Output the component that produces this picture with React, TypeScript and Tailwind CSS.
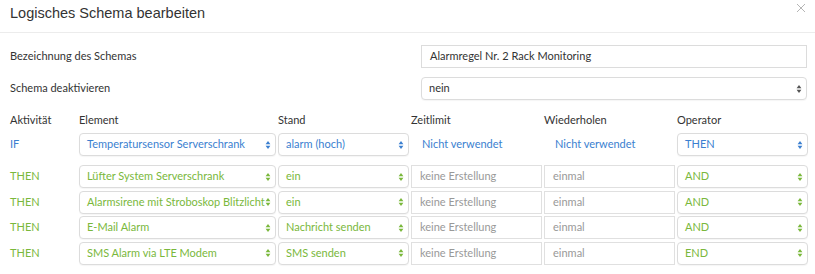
import React from "react";

const BLUE = "text-[#3b7fd0]";
const GREEN = "text-[#7ab83c]";

function Arrows({ color }: { color: string }) {
  return (
    <svg width="6" height="10" viewBox="0 0 6 10" className="shrink-0">
      <path d="M3 1 L5.4 4.2 L0.6 4.2 Z" fill={color} />
      <path d="M3 9 L5.4 5.8 L0.6 5.8 Z" fill={color} />
    </svg>
  );
}

function Select({
  text,
  tone,
}: {
  text: string;
  tone: "blue" | "green" | "dark";
}) {
  const cls = tone === "blue" ? BLUE : tone === "green" ? GREEN : "text-[#333]";
  const arrow = tone === "blue" ? "#3b7fd0" : tone === "green" ? "#7ab83c" : "#555";
  return (
    <div className="h-[23px] flex items-center justify-between rounded-[4px] border border-[#dcdcdc] bg-white pl-[7px] pr-[4px] shadow-[0_1px_1px_rgba(0,0,0,0.04)]">
      <span className={`${cls} whitespace-nowrap`}>{text}</span>
      <Arrows color={arrow} />
    </div>
  );
}

function Input({ text }: { text: string }) {
  return (
    <div className="h-[23px] flex items-center border border-[#e0e0e0] bg-white pl-[8px] text-[#999]">
      {text}
    </div>
  );
}

const rows = [
  { el: "Lüfter System Serverschrank", st: "ein", op: "AND" },
  { el: "Alarmsirene mit Stroboskop Blitzlicht", st: "ein", op: "AND" },
  { el: "E-Mail Alarm", st: "Nachricht senden", op: "AND" },
  { el: "SMS Alarm via LTE Modem", st: "SMS senden", op: "END" },
];

const grid = "grid grid-cols-[67px_197px_131px_131px_131px_131px] gap-x-[2px]";

export default function App() {
  return (
    <div
      className="w-[815px] h-[274px] bg-white text-[11px] text-[#333] overflow-hidden"
      style={{ fontFamily: "Lato, 'Open Sans', sans-serif" }}
    >
      <div className="h-[33px] border-b border-[#ececec] flex items-start justify-between pl-[10px] pr-[9px]">
        <div
          className="text-[14.5px] text-[#333] mt-[3px]"
          style={{ fontFamily: "'Liberation Sans', Arial, sans-serif" }}
        >
          Logisches Schema bearbeiten
        </div>
        <svg width="10" height="10" viewBox="0 0 10 10" className="mt-[3px]">
          <path d="M1 1 L9 9 M9 1 L1 9" stroke="#b5b5b5" strokeWidth="1" />
        </svg>
      </div>

      <div className="pt-[12px] pl-[10px] pr-[8px]">
        <div className="flex items-center h-[23px]">
          <div className="w-[411px]">Bezeichnung des Schemas</div>
          <div className="flex-1 h-[23px] flex items-center border border-[#dcdcdc] pl-[8px] text-[#333]">
            Alarmregel Nr. 2 Rack Monitoring
          </div>
        </div>
        <div className="flex items-center h-[23px] mt-[9px]">
          <div className="w-[411px]">Schema deaktivieren</div>
          <div className="flex-1">
            <Select text="nein" tone="dark" />
          </div>
        </div>

        <div className={`${grid} mt-[12px] h-[16px] items-center`}>
          <div>Aktivität</div>
          <div>Element</div>
          <div>Stand</div>
          <div>Zeitlimit</div>
          <div>Wiederholen</div>
          <div>Operator</div>
        </div>

        <div className={`${grid} mt-[5px] items-center`}>
          <div className={BLUE}>IF</div>
          <Select text="Temperatursensor Serverschrank" tone="blue" />
          <Select text="alarm (hoch)" tone="blue" />
          <div className={`${BLUE} pl-[11px]`}>Nicht verwendet</div>
          <div className={`${BLUE} pl-[11px]`}>Nicht verwendet</div>
          <Select text="THEN" tone="blue" />
        </div>

        <div className="mt-[9px] flex flex-col gap-[2.5px]">
          {rows.map((r) => (
            <div key={r.el} className={`${grid} items-center`}>
              <div className={GREEN}>THEN</div>
              <Select text={r.el} tone="green" />
              <Select text={r.st} tone="green" />
              <Input text="keine Erstellung" />
              <Input text="einmal" />
              <Select text={r.op} tone="green" />
            </div>
          ))}
        </div>
      </div>
    </div>
  );
}
